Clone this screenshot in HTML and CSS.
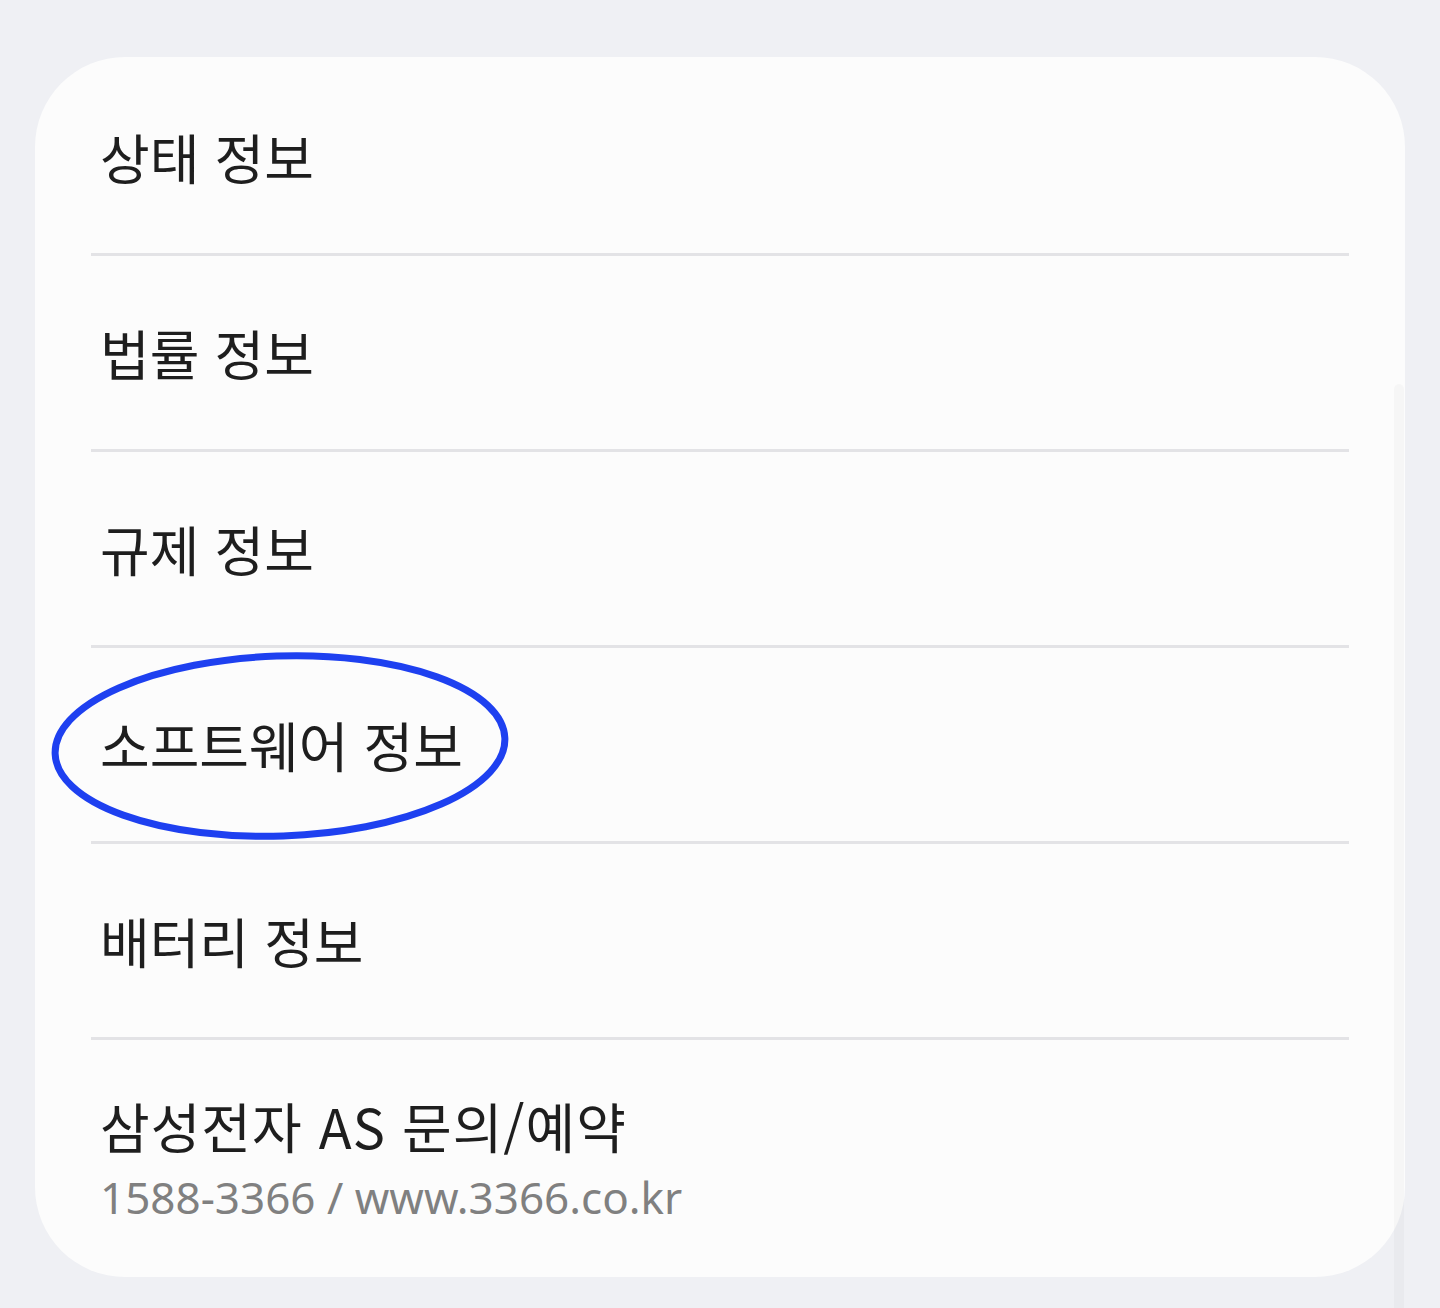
FILE: index.html
```html
<!DOCTYPE html>
<html lang="ko">
<head>
<meta charset="utf-8">
<link rel="stylesheet" href="styles.css">
</head>
<body>
<div class="page">
  <div class="card">
    <div class="row"><span class="title">상태 정보</span></div>
    <div class="row"><span class="title">법률 정보</span></div>
    <div class="row"><span class="title">규제 정보</span></div>
    <div class="row highlighted">
      <span class="title">소프트웨어 정보</span>
      <svg class="circle" width="470" height="200" viewBox="0 0 470 200">
        <ellipse cx="235" cy="100" rx="225" ry="90" transform="rotate(-2 235 100)" fill="none" stroke="#1e40f0" stroke-width="7"/>
      </svg>
    </div>
    <div class="row"><span class="title">배터리 정보</span></div>
    <div class="row last">
      <span class="title">삼성전자 AS 문의/예약</span>
      <span class="sub">1588-3366 / www.3366.co.kr</span>
    </div>
  </div>
  <div class="scrollbar"></div>
</div>
</body>
</html>
```
FILE: styles.css
```css
html, body {
  margin: 0;
  padding: 0;
  background: #eff0f4;
}
.page {
  position: relative;
  width: 1440px;
  height: 1308px;
  padding: 57px 35px 0 35px;
  box-sizing: border-box;
}
.card {
  background: #fcfcfc;
  border-radius: 90px;
  height: 1220px;
  padding: 3px 56px 0 56px;
  box-sizing: border-box;
  display: flex;
  flex-direction: column;
  font-family: "Noto Sans CJK KR", "Noto Sans", sans-serif;
}
.row {
  position: relative;
  height: 193px;
  display: flex;
  flex-direction: column;
  justify-content: center;
  border-bottom: 3px solid #e3e3e6;
  padding-left: 9px;
}
.row.last {
  border-bottom: none;
  flex: 1;
  height: auto;
  padding-bottom: 2px;
}
.title {
  font-size: 54px;
  color: #1e1e1e;
  letter-spacing: 0;
  line-height: 70px;
}
.row.last .title {
  letter-spacing: 1px;
}
.sub {
  font-family: "Noto Sans", "Noto Sans CJK KR", sans-serif;
  font-size: 44px;
  color: #808080;
  line-height: 56px;
  margin-top: 8px;
  letter-spacing: 0;
}
.circle {
  position: absolute;
  left: -46px;
  top: -2px;
}
.scrollbar {
  position: absolute;
  left: 1394px;
  top: 384px;
  width: 10px;
  height: 924px;
  border-radius: 5px 5px 0 0;
  background: rgba(0, 0, 0, 0.025);
}
```
